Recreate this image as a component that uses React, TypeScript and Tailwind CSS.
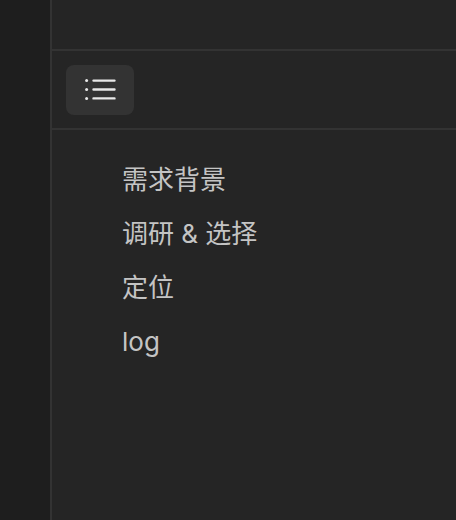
import { useState } from "react";

const sections = ["需求背景", "调研 & 选择", "定位", "log"];

const TocIcon = () => (
  <svg width="31" height="21" viewBox="0 0 31 21" fill="none">
    <circle cx="1.6" cy="1.6" r="1.5" fill="#e8e8e8" />
    <circle cx="1.6" cy="10.5" r="1.5" fill="#e8e8e8" />
    <circle cx="1.6" cy="19.4" r="1.5" fill="#e8e8e8" />
    <path d="M8.5 1.6H29.5M8.5 10.5H29.5M8.5 19.4H29.5" stroke="#e8e8e8" strokeWidth="2.4" strokeLinecap="round" />
  </svg>
);

export default function App() {
  const [active, setActive] = useState<number | null>(null);

  return (
    <div
      className="flex h-[520px] w-[456px] overflow-hidden bg-[#252525]"
      style={{ fontFamily: 'Inter, "Noto Sans CJK SC", sans-serif' }}
    >
      <aside className="w-[52px] shrink-0 border-r-2 border-[#333333] bg-[#1e1e1e]" />
      <main className="flex flex-1 flex-col">
        <div className="h-[51px] shrink-0 border-b-2 border-[#333333]" />
        <div className="flex h-[79px] shrink-0 items-center border-b-2 border-[#333333] px-[14px]">
          <button className="flex h-[50px] w-[68px] items-center justify-center rounded-lg bg-[#333333]">
            <TocIcon />
          </button>
        </div>
        <nav className="flex flex-col pl-[70px] pt-[23px]">
          {sections.map((s, i) => (
            <a
              key={s}
              onMouseEnter={() => setActive(i)}
              onMouseLeave={() => setActive(null)}
              className={`h-[54px] text-[26px] leading-[54px] text-[#c4c4c4] cursor-pointer ${
                active === i ? "text-white" : ""
              }`}
            >
              {s}
            </a>
          ))}
        </nav>
      </main>
    </div>
  );
}
